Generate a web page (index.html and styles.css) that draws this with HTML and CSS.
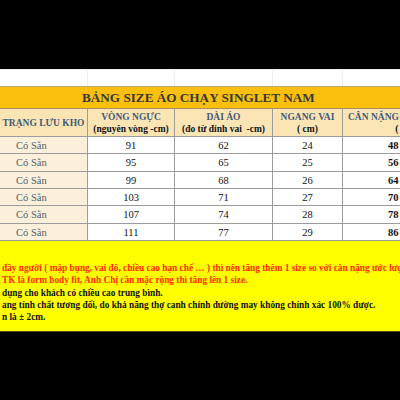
FILE: index.html
```html
<!DOCTYPE html>
<html>
<head>
<meta charset="utf-8">
<link rel="stylesheet" href="styles.css">
</head>
<body>
<div class="screen">
  <div class="top"></div>
  <div class="sheet">
    <div class="row blank">
      <div class="cell"></div><div class="cell"></div><div class="cell"></div><div class="cell"></div><div class="cell"></div>
    </div>
    <div class="title">BẢNG SIZE ÁO CHẠY SINGLET NAM</div>
    <div class="row head">
      <div class="cell"><span class="h1">TRẠNG LƯU KHO</span></div>
      <div class="cell"><span class="h1">VÒNG NGỰC</span><span class="h2">(nguyên vòng -cm)</span></div>
      <div class="cell"><span class="h1">DÀI ÁO</span><span class="h2">(đo từ đỉnh vai &nbsp;-cm)</span></div>
      <div class="cell"><span class="h1">NGANG VAI</span><span class="h2">( cm)</span></div>
      <div class="cell"><span class="h1">CÂN NẶNG ƯỚC LƯỢNG</span><span class="h2">( kg)</span></div>
    </div>
    <div class="row data r17"><div class="cell stock">Có Sẵn</div><div class="cell">91</div><div class="cell">62</div><div class="cell">24</div><div class="cell kg">48 - 55</div></div>
    <div class="row data r18"><div class="cell stock">Có Sẵn</div><div class="cell">95</div><div class="cell">65</div><div class="cell">25</div><div class="cell kg">56 - 63</div></div>
    <div class="row data r17"><div class="cell stock">Có Sẵn</div><div class="cell">99</div><div class="cell">68</div><div class="cell">26</div><div class="cell kg">64 - 69</div></div>
    <div class="row data r17"><div class="cell stock">Có Sẵn</div><div class="cell">103</div><div class="cell">71</div><div class="cell">27</div><div class="cell kg">70 - 77</div></div>
    <div class="row data r18"><div class="cell stock">Có Sẵn</div><div class="cell">107</div><div class="cell">74</div><div class="cell">28</div><div class="cell kg">78 - 85</div></div>
    <div class="row data r17"><div class="cell stock">Có Sẵn</div><div class="cell">111</div><div class="cell">77</div><div class="cell">29</div><div class="cell kg">86 - 95</div></div>
    <div class="notes">
      <p class="red">đầy người ( mập bụng, vai đô, chiều cao hạn chế … ) thì nên tăng thêm 1 size so với cân nặng ước lượng.</p>
      <p class="red">TK là form body fit, Anh Chị cần mặc rộng thì tăng lên 1 size.</p>
      <p>dụng cho khách có chiều cao trung bình.</p>
      <p>ang tính chất tương đối, do khả năng thợ canh chỉnh đường may không chính xác 100% được.</p>
      <p>n là ± 2cm.</p>
    </div>
  </div>
</div>
</body>
</html>
```
FILE: styles.css
```css
html, body {
  margin: 0;
  padding: 0;
  background: #000;
}
.screen {
  width: 400px;
  height: 400px;
  overflow: hidden;
  background: #000;
  font-family: "Liberation Serif", "Times New Roman", serif;
}
.top {
  height: 68px;
}
.sheet {
  width: 467px;
  background: #fff;
}
.row {
  display: grid;
  grid-template-columns: 88px 87px 98px 70px 124px;
}
.cell {
  box-sizing: border-box;
  border-right: 1px solid #9c9c9c;
  border-bottom: 1px solid #9c9c9c;
  display: flex;
  align-items: center;
  justify-content: center;
  overflow: hidden;
  white-space: nowrap;
}
.blank {
  height: 18px;
  box-sizing: border-box;
  border-top: 1px solid #ececec;
  border-bottom: 1px solid #b8a878;
  margin-top: 1px;
}
.blank .cell {
  border-right: 1px solid #ececec;
  border-bottom: 0;
}
.title {
  height: 22px;
  box-sizing: border-box;
  background: #fbbf0e;
  border-bottom: 1px solid #a89060;
  font-weight: bold;
  font-size: 13.2px;
  line-height: 21px;
  color: #383838;
  padding-left: 82px;
  white-space: nowrap;
}
.head {
  height: 28px;
}
.head .cell {
  background: #fce5b5;
  flex-direction: column;
  font-weight: bold;
  font-size: 9.5px;
  line-height: 12px;
}
.h1 {
  color: #405a78;
}
.h2 {
  color: #111;
}
.r17 { height: 17px; }
.r18 { height: 18px; }
.data .cell {
  font-size: 10.5px;
  color: #111;
}
.data .stock {
  background: #fdf0da;
  color: #4f5d6c;
  justify-content: flex-start;
  padding-left: 16px;
}
.data .kg {
  font-weight: bold;
  justify-content: flex-start;
  padding-left: 45px;
}
.notes {
  height: 91px;
  box-sizing: border-box;
  background: #ffff00;
  border-bottom: 1px solid #4d4a12;
  padding: 21px 0 0 2px;
  width: 400px;
}
.notes p {
  margin: 0;
  font-size: 9.3px;
  line-height: 12.3px;
  font-weight: bold;
  color: #111;
  white-space: nowrap;
}
.notes p.red {
  color: #ff2d00;
}
```
